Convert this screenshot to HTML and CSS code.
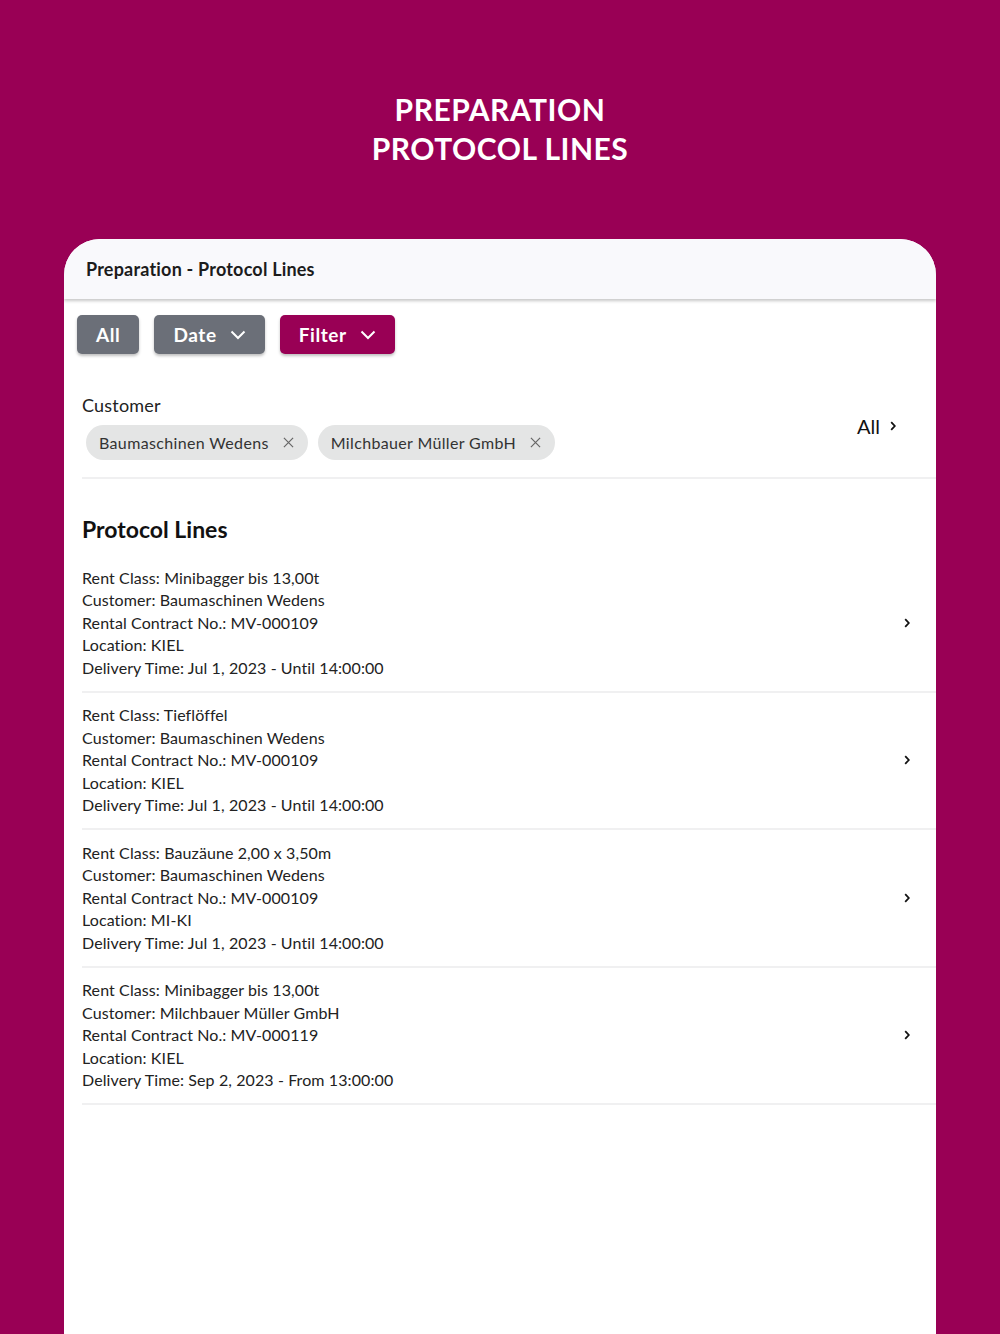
FILE: index.html
```html
<!DOCTYPE html>
<html lang="en">
<head>
    <meta charset="UTF-8">
    <meta name="viewport" content="width=device-width, initial-scale=1.0">
    <title>Preparation - Protocol Lines</title>
    <link rel="stylesheet" href="styles.css">
</head>
<body>
    <div class="hero">
        <div class="hero-title">PREPARATION<br>PROTOCOL LINES</div>
    </div>

    <div class="card">
        <div class="card-header">Preparation - Protocol Lines</div>

        <div class="toolbar">
            <button class="btn btn-gray">All</button>
            <button class="btn btn-gray">Date
                <svg class="caret" viewBox="0 0 16 10"><path d="M1.5 1.5 L8 8 L14.5 1.5" /></svg>
            </button>
            <button class="btn btn-primary">Filter
                <svg class="caret" viewBox="0 0 16 10"><path d="M1.5 1.5 L8 8 L14.5 1.5" /></svg>
            </button>
        </div>

        <div class="filter-block">
            <div class="filter-left">
                <div class="filter-label">Customer</div>
                <div class="chips">
                    <span class="chip">Baumaschinen Wedens
                        <svg class="chip-x" viewBox="0 0 12 12"><path d="M1 1 L11 11 M11 1 L1 11" /></svg>
                    </span>
                    <span class="chip">Milchbauer Müller GmbH
                        <svg class="chip-x" viewBox="0 0 12 12"><path d="M1 1 L11 11 M11 1 L1 11" /></svg>
                    </span>
                </div>
            </div>
            <div class="filter-all">All
                <svg class="chev" viewBox="0 0 6 10"><path d="M1.2 1.2 L4.8 5 L1.2 8.8" /></svg>
            </div>
        </div>

        <h2 class="section-title">Protocol Lines</h2>

        <ul class="lines" id="lines"></ul>
    </div>

    <script>
        const lines = [
            ['Minibagger bis 13,00t', 'Baumaschinen Wedens', 'MV-000109', 'KIEL', 'Jul 1, 2023 - Until 14:00:00'],
            ['Tieflöffel', 'Baumaschinen Wedens', 'MV-000109', 'KIEL', 'Jul 1, 2023 - Until 14:00:00'],
            ['Bauzäune 2,00 x 3,50m', 'Baumaschinen Wedens', 'MV-000109', 'MI-KI', 'Jul 1, 2023 - Until 14:00:00'],
            ['Minibagger bis 13,00t', 'Milchbauer Müller GmbH', 'MV-000119', 'KIEL', 'Sep 2, 2023 - From 13:00:00']
        ];

        const list = document.getElementById('lines');
        lines.forEach(l => {
            const li = document.createElement('li');
            li.className = 'line';
            li.innerHTML =
                '<div class="line-text">' +
                '<div>Rent Class: ' + l[0] + '</div>' +
                '<div>Customer: ' + l[1] + '</div>' +
                '<div>Rental Contract No.: ' + l[2] + '</div>' +
                '<div>Location: ' + l[3] + '</div>' +
                '<div>Delivery Time: ' + l[4] + '</div>' +
                '</div>' +
                '<svg class="chev chev-line" viewBox="0 0 6 10"><path d="M1.2 1.2 L4.8 5 L1.2 8.8" /></svg>';
            list.appendChild(li);
        });
    </script>
</body>
</html>
```

FILE: styles.css
```css
body {
    font-family: 'Lato', 'Noto Sans', sans-serif;
    background-color: #990055;
    margin: 0;
    height: 1334px;
    overflow: hidden;
    color: #222;
}

.hero {
    height: 239px;
    display: flex;
    justify-content: center;
}

.hero-title {
    margin-top: 90px;
    color: #fff;
    font-size: 30px;
    font-weight: 700;
    line-height: 39px;
    text-align: center;
    letter-spacing: 0.5px;
}

.card {
    background-color: #fff;
    margin: 0 64px;
    border-radius: 36px 36px 0 0;
    height: 1095px;
    overflow: hidden;
}

.card-header {
    height: 60px;
    background-color: #f9f9fc;
    box-shadow: 0 2px 3px rgba(0, 0, 0, 0.22);
    display: flex;
    align-items: center;
    padding-left: 22px;
    font-size: 18px;
    font-weight: 700;
    color: #1c1c1c;
    position: relative;
    letter-spacing: 0.2px;
}

.toolbar {
    display: flex;
    gap: 15px;
    padding: 16px 0 0 13px;
}

.btn {
    height: 39px;
    border: none;
    border-radius: 5px;
    color: #fff;
    font-family: inherit;
    font-size: 19px;
    font-weight: 700;
    padding: 0 19px;
    display: flex;
    align-items: center;
    gap: 13px;
    box-shadow: 0 2px 3px rgba(0, 0, 0, 0.25);
    letter-spacing: 0.6px;
}

.btn-gray {
    background-color: #6b6f78;
}

.btn-primary {
    background-color: #990055;
}

.caret {
    width: 16px;
    height: 10px;
    fill: none;
    stroke: #fff;
    stroke-width: 2;
}

.filter-block {
    margin: 0 0 0 18px;
    padding: 40px 40px 17px 0;
    border-bottom: 2px solid #f0f0f1;
    display: flex;
    justify-content: space-between;
    align-items: center;
}

.filter-label {
    font-size: 18px;
    color: #222;
    margin-bottom: 9px;
    letter-spacing: 0.2px;
}

.chips {
    display: flex;
    gap: 10px;
    padding-left: 4px;
}

.chip {
    height: 35px;
    border-radius: 18px;
    background-color: #e4e5e5;
    display: flex;
    align-items: center;
    gap: 14px;
    padding: 0 14px 0 13px;
    font-size: 16px;
    color: #333;
    letter-spacing: 0.35px;
}

.chip-x {
    width: 11px;
    height: 11px;
    fill: none;
    stroke: #666;
    stroke-width: 1.3;
}

.filter-all {
    font-size: 20px;
    color: #111;
    display: flex;
    align-items: center;
    gap: 10px;
    margin-top: -2px;
}

.chev {
    width: 6px;
    height: 10px;
    fill: none;
    stroke: #111;
    stroke-width: 1.8;
}

.section-title {
    margin: 36px 0 12px 18px;
    font-size: 23px;
    font-weight: 700;
    color: #111;
}

.lines {
    list-style-type: none;
    margin: 0 0 0 18px;
    padding: 0;
}

.line {
    display: flex;
    justify-content: space-between;
    align-items: center;
    padding: 11.5px 26px 11.5px 0;
    border-bottom: 2px solid #f0f0f1;
}

.line-text {
    font-size: 16px;
    line-height: 22.5px;
    color: #222;
    letter-spacing: 0.1px;
}
```
